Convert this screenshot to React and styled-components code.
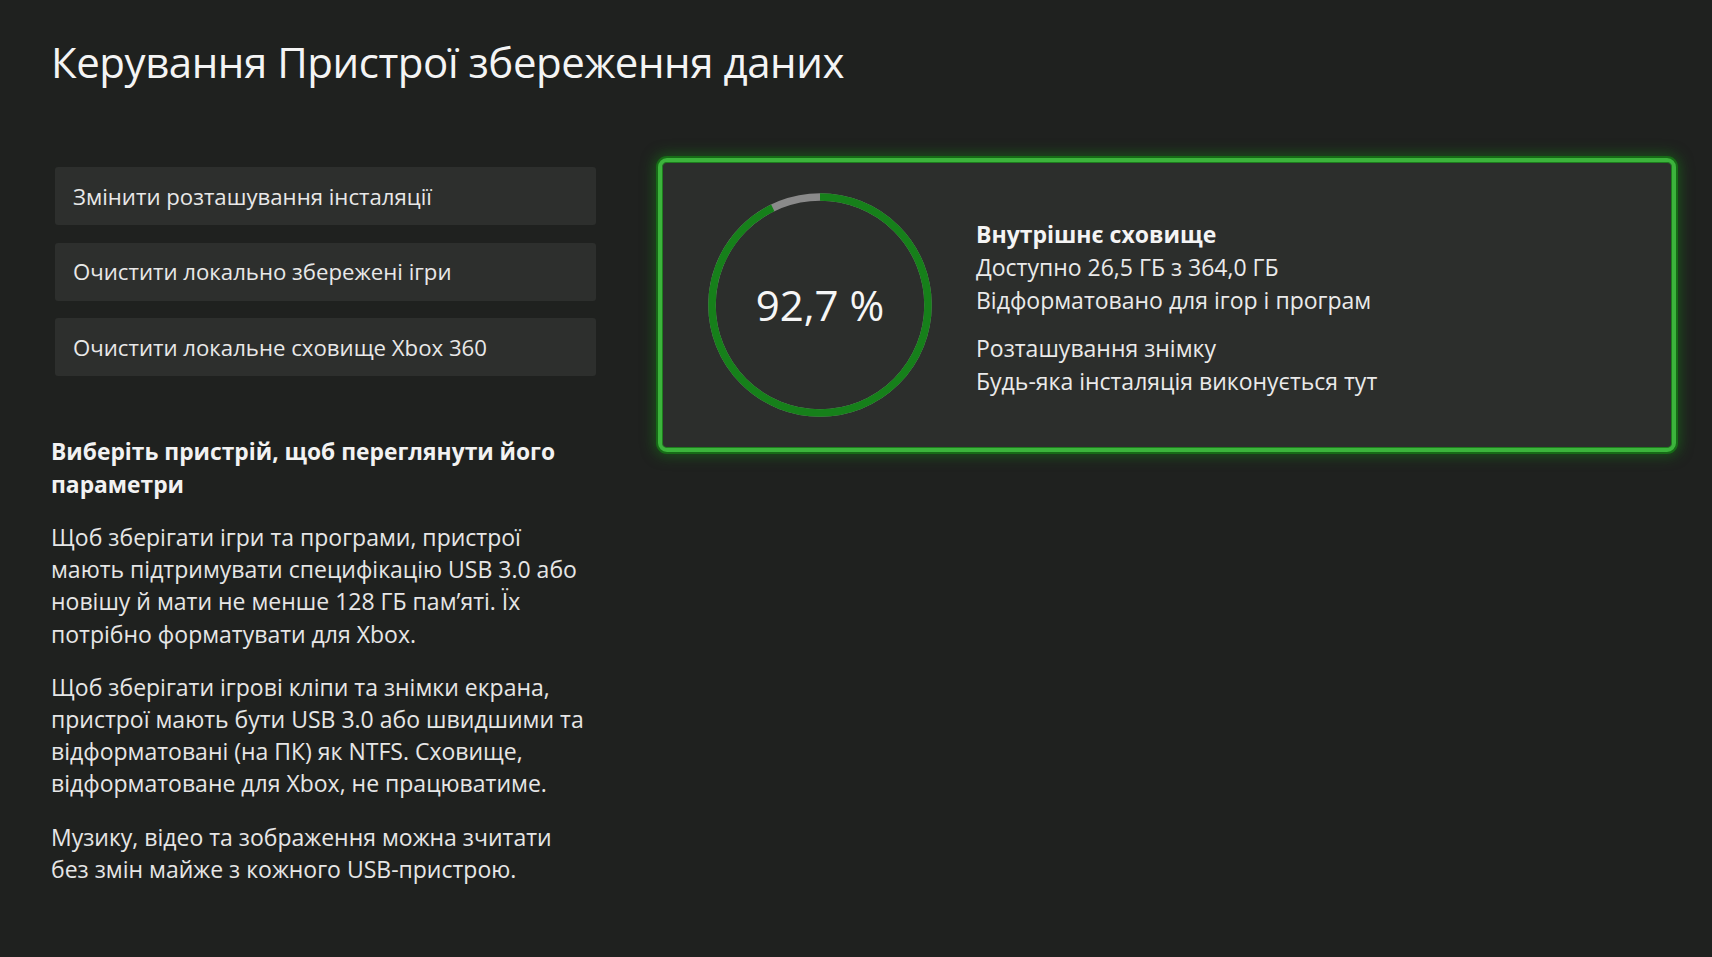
import React from 'react'
import styled, { createGlobalStyle } from 'styled-components'

const GlobalStyle = createGlobalStyle`
  html, body {
    margin: 0;
    background: #1f211f;
  }
  body {
    font-family: "Open Sans", "Noto Sans", "DejaVu Sans", sans-serif;
    color: #ececec;
  }
`

const Page = styled.div`
  min-height: 957px;
  box-sizing: border-box;
  padding: 40px 36px 0 51px;
`

const Title = styled.h1`
  margin: 0;
  font-size: 42px;
  line-height: 44px;
  letter-spacing: -0.45px;
  font-weight: 400;
  color: #f4f4f4;
`

const Main = styled.div`
  display: flex;
  align-items: flex-start;
  margin-top: 73px;
`

const LeftColumn = styled.div`
  width: 545px;
  padding-top: 10px;
  flex-shrink: 0;
`

const ActionList = styled.div`
  display: flex;
  flex-direction: column;
  gap: 17.5px;
  padding-left: 4px;
`

const ActionButton = styled.div`
  height: 58px;
  display: flex;
  align-items: center;
  padding-left: 18px;
  background: #2d2f2d;
  border-radius: 3px;
  font-size: 22.2px;
  color: #e8e8e8;
`

const Heading = styled.div`
  margin-top: 60px;
  font-size: 22.8px;
  line-height: 32.5px;
  font-weight: 700;
  color: #f2f2f2;
`

const Para = styled.p`
  margin: 21px 0 0;
  font-size: 23px;
  line-height: 32.2px;
  color: #e6e6e6;
  white-space: nowrap;

  &:first-of-type {
    margin-top: 20px;
  }
`

const Card = styled.div`
  flex: 1;
  margin: 1px 0 0 62px;
  height: 294px;
  box-sizing: border-box;
  display: flex;
  align-items: center;
  padding: 6px 0 0 46px;
  gap: 44px;
  background: #2c2e2c;
  border: 4px solid #3cb43c;
  border-radius: 9px;
  box-shadow: 0 0 0 2px #176b17, 0 0 13px 4px rgba(24, 120, 24, 0.55),
    inset 0 0 0 1px #1e7e1e;
`

const Ring = styled.div`
  display: grid;
  width: 224px;
  height: 224px;
  margin-top: -6px;
  place-items: center;

  & > * {
    grid-area: 1 / 1;
  }
`

const Percent = styled.div`
  font-size: 42px;
  color: #f6f6f6;
  line-height: 1;
`

const Info = styled.div`
  display: flex;
  flex-direction: column;
  gap: 15px;
  font-size: 23px;
  line-height: 33px;
  color: #eaeaea;
`

const InfoGroup = styled.div`
  display: flex;
  flex-direction: column;
`

const InfoTitle = styled.div`
  font-weight: 700;
  color: #f4f4f4;
`

const UsageRing = ({ used }) => {
  const r = 108
  const c = 2 * Math.PI * r
  return (
    <Ring>
      <svg width="224" height="224" viewBox="0 0 224 224">
        <circle cx="112" cy="112" r={r} fill="none" stroke="#8a8a8a" strokeWidth="7.5" />
        <circle
          cx="112"
          cy="112"
          r={r}
          fill="none"
          stroke="#16801a"
          strokeWidth="7.5"
          strokeDasharray={`${c * used} ${c}`}
          transform="rotate(-90 112 112)"
        />
      </svg>
      <Percent>92,7 %</Percent>
    </Ring>
  )
}

const actions = [
  'Змінити розташування інсталяції',
  'Очистити локально збережені ігри',
  'Очистити локальне сховище Xbox 360',
]

export default function App() {
  return (
    <>
      <GlobalStyle />
      <Page>
        <Title>Керування Пристрої збереження даних</Title>
        <Main>
          <LeftColumn>
            <ActionList>
              {actions.map((a) => (
                <ActionButton key={a}>{a}</ActionButton>
              ))}
            </ActionList>
            <Heading>
              Виберіть пристрій, щоб переглянути його
              <br />
              параметри
            </Heading>
            <Para>
              Щоб зберігати ігри та програми, пристрої
              <br />
              мають підтримувати специфікацію USB 3.0 або
              <br />
              новішу й мати не менше 128 ГБ пам’яті. Їх
              <br />
              потрібно форматувати для Xbox.
            </Para>
            <Para>
              Щоб зберігати ігрові кліпи та знімки екрана,
              <br />
              пристрої мають бути USB 3.0 або швидшими та
              <br />
              відформатовані (на ПК) як NTFS. Сховище,
              <br />
              відформатоване для Xbox, не працюватиме.
            </Para>
            <Para>
              Музику, відео та зображення можна зчитати
              <br />
              без змін майже з кожного USB-пристрою.
            </Para>
          </LeftColumn>
          <Card>
            <UsageRing used={0.927} />
            <Info>
              <InfoGroup>
                <InfoTitle>Внутрішнє сховище</InfoTitle>
                <div>Доступно 26,5 ГБ з 364,0 ГБ</div>
                <div>Відформатовано для ігор і програм</div>
              </InfoGroup>
              <InfoGroup>
                <div>Розташування знімку</div>
                <div>Будь-яка інсталяція виконується тут</div>
              </InfoGroup>
            </Info>
          </Card>
        </Main>
      </Page>
    </>
  )
}
